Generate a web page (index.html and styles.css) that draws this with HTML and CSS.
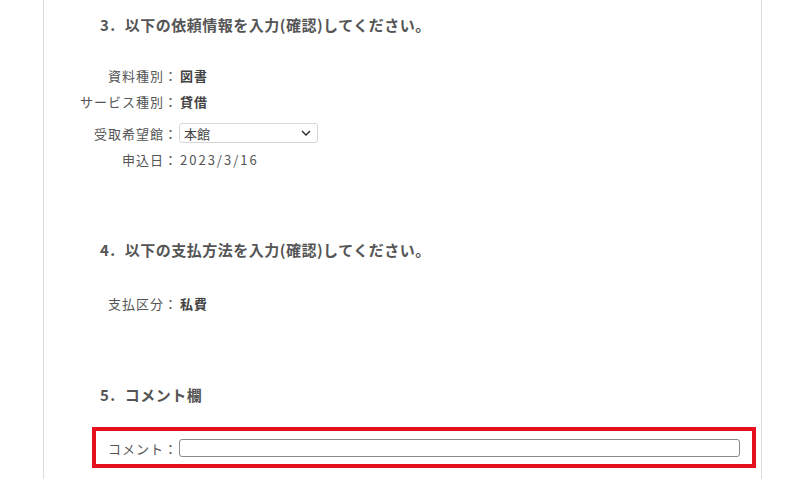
FILE: index.html
```html
<!DOCTYPE html>
<html lang="ja">
<head>
    <meta charset="UTF-8">
    <title>依頼情報の入力</title>
    <link rel="stylesheet" href="styles.css">
</head>
<body>
    <div class="page">
        <h2 class="step-title"><span class="step-no">3.</span>以下の依頼情報を入力(確認)してください。</h2>
        <div class="form-rows">
            <div class="row">
                <span class="label">資料種別：</span>
                <span class="value">図書</span>
            </div>
            <div class="row">
                <span class="label">サービス種別：</span>
                <span class="value">貸借</span>
            </div>
            <div class="row row-select">
                <span class="label">受取希望館：</span>
                <div class="select-wrap">
                    <select class="select">
                        <option>本館</option>
                    </select>
                    <svg class="chevron" width="10" height="6" viewBox="0 0 10 6">
                        <path d="M1 1 L5 5 L9 1" fill="none" stroke="#333" stroke-width="1.5"/>
                    </svg>
                </div>
            </div>
            <div class="row">
                <span class="label">申込日：</span>
                <span class="value plain">2023/3/16</span>
            </div>
        </div>

        <h2 class="step-title step-4"><span class="step-no">4.</span>以下の支払方法を入力(確認)してください。</h2>
        <div class="form-rows pay-rows">
            <div class="row">
                <span class="label">支払区分：</span>
                <span class="value">私費</span>
            </div>
        </div>

        <h2 class="step-title step-5"><span class="step-no">5.</span>コメント欄</h2>
        <div class="comment-box">
            <div class="row">
                <span class="label">コメント：</span>
                <input type="text" class="comment-input">
            </div>
        </div>
    </div>
</body>
</html>
```

FILE: styles.css
```css
body {
    margin: 0;
    background-color: #fff;
    font-family: "Noto Sans CJK JP", "Noto Sans", sans-serif;
    color: #555;
    overflow: hidden;
}

.page {
    margin-left: 43px;
    width: 717px;
    min-height: 479px;
    padding-top: 13px;
    border-left: 1px solid #dcdcdc;
    border-right: 1px solid #dcdcdc;
}

.step-title {
    margin: 0 0 0 56px;
    font-size: 15px;
    line-height: 24px;
    font-weight: bold;
    letter-spacing: 0.5px;
    color: #555;
}

.step-no {
    display: inline-block;
    letter-spacing: 1.5px;
    margin-right: 8px;
}

.step-4 {
    margin-top: 66px;
}

.step-5 {
    margin-top: 67px;
}

.form-rows {
    margin-top: 25px;
}

.pay-rows {
    margin-top: 28px;
}

.row {
    display: flex;
    align-items: center;
    height: 26px;
    font-size: 13px;
    letter-spacing: 1px;
}

.row-select {
    margin-top: 6px;
}

.label {
    width: 134px;
    text-align: right;
    white-space: nowrap;
    letter-spacing: 1px;
    margin-right: -1px;
}

.value {
    padding-left: 3px;
    font-weight: bold;
    color: #444;
}

.value.plain {
    font-weight: normal;
    color: #555;
    letter-spacing: 2px;
}

/* セレクトボックス */
.select-wrap {
    position: relative;
    margin-left: 2px;
}

.select {
    appearance: none;
    -webkit-appearance: none;
    width: 139px;
    height: 20px;
    padding: 0 0 0 4px;
    border: 1px solid #d6d6d6;
    border-radius: 3px;
    background-color: #fff;
    font-family: "Noto Sans CJK JP", "Noto Sans", sans-serif;
    font-size: 13px;
    color: #444;
    display: block;
}

.chevron {
    position: absolute;
    right: 7px;
    top: 7px;
}

/* コメント欄 */
.comment-box {
    margin: 20px 0 0 48px;
    width: 664px;
    height: 41px;
    box-sizing: border-box;
    border: 4px solid #e60f1e;
    padding-top: 4px;
}

.comment-box .label {
    width: 82px;
}

.comment-input {
    margin-left: 2px;
    width: 561px;
    height: 18px;
    box-sizing: border-box;
    border: 1px solid #8a8a8a;
    border-radius: 3px;
    padding: 0 4px;
    outline: none;
}
```
